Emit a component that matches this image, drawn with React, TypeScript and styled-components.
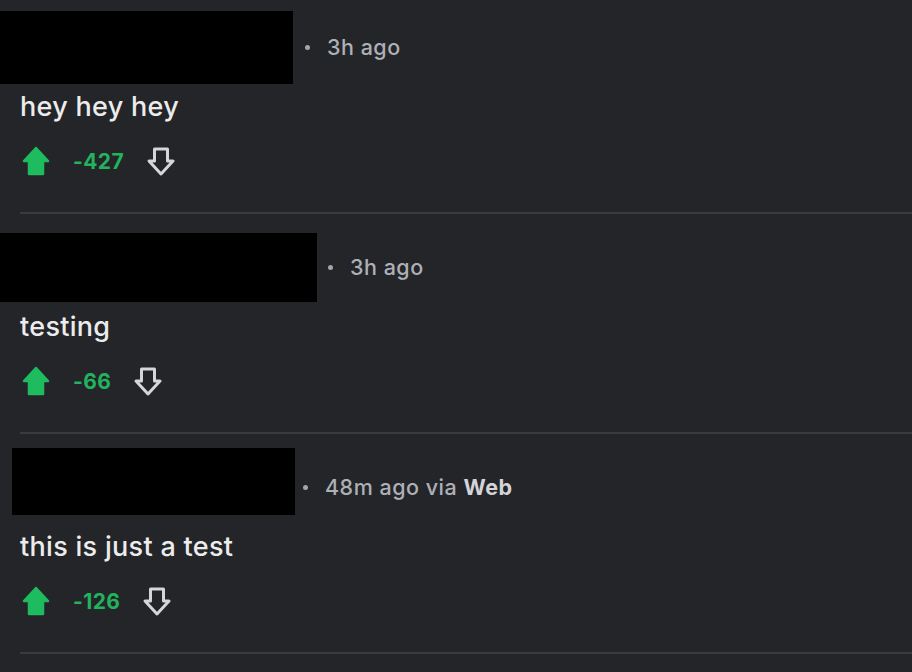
import React from "react";
import styled, { createGlobalStyle } from "styled-components";

const Global = createGlobalStyle`
  html, body { margin: 0; padding: 0; background: #242529; }
  body { font-family: Inter, "Noto Sans", sans-serif; overflow: hidden; }
`;

const List = styled.div`
  padding-left: 20px;
  width: 892px;
`;

const Comment = styled.article`
  padding: 18px 0 36px;
  border-bottom: 2px solid #3a3b40;
  &:first-child { padding-top: 12px; }
`;

const Header = styled.header`
  display: flex;
  align-items: center;
  height: 70px;
`;

const Redacted = styled.span<{ $w: number; $h: number; $left: number; $trail: number; $shift?: number }>`
  display: block;
  flex: none;
  background: #000;
  width: ${(p) => p.$w}px;
  height: ${(p) => p.$h}px;
  margin-left: ${(p) => p.$left}px;
  margin-right: ${(p) => p.$trail}px;
  margin-top: ${(p) => (p.$shift ?? 0) * 2}px;
`;

const Dot = styled.span`
  width: 5px;
  height: 5px;
  border-radius: 50%;
  background: #a3a5ac;
  margin-right: 17px;
  flex: none;
`;

const Meta = styled.span`
  font-size: 21.5px;
  font-weight: 500;
  color: #aeb0b7;
  letter-spacing: 0.5px;
  b { color: #d3d5da; font-weight: 700; }
`;

const Body = styled.p`
  margin: 7px 0 0;
  font-size: 27px;
  font-weight: 500;
  line-height: 36px;
  color: #ececec;
  letter-spacing: 0.3px;
`;

const Votes = styled.div`
  display: flex;
  align-items: center;
  gap: 23px;
  height: 30px;
  margin-top: 21px;
  padding-left: 2px;
`;

const Score = styled.span`
  font-size: 21px;
  font-weight: 700;
  color: #21b35d;
  letter-spacing: 0.4px;
`;

const IconBtn = styled.span`
  display: flex;
  width: 28px;
  height: 30px;
`;

const UpIcon = () => (
  <IconBtn>
    <svg width="28" height="30" viewBox="0 0 28 30">
      <path
        d="M14 2 L26 15 H21 V28 H7 V15 H2 Z"
        fill="#1fbb5f"
        stroke="#1fbb5f"
        strokeWidth="2.5"
        strokeLinejoin="round"
      />
    </svg>
  </IconBtn>
);

const DownIcon = () => (
  <IconBtn>
    <svg width="28" height="30" viewBox="0 0 28 30">
      <path
        d="M14 28 L26 15 H20.5 V3 H7.5 V15 H2 Z"
        fill="none"
        stroke="#d6d6d8"
        strokeWidth="3"
        strokeLinejoin="round"
      />
    </svg>
  </IconBtn>
);

type Item = {
  box: { w: number; h: number; left: number; trail: number; shift?: number };
  meta: React.ReactNode;
  text: string;
  score: string;
};

const items: Item[] = [
  { box: { w: 293, h: 73, left: -20, trail: 12 }, meta: "3h ago", text: "hey hey hey", score: "-427" },
  { box: { w: 317, h: 69, left: -20, trail: 11 }, meta: "3h ago", text: "testing", score: "-66" },
  {
    box: { w: 283, h: 67, left: -8, trail: 8, shift: -5.5 },
    meta: (
      <>
        48m ago via <b>Web</b>
      </>
    ),
    text: "this is just a test",
    score: "-126",
  },
];

export default function App() {
  return (
    <>
      <Global />
      <List>
        {items.map((it, i) => (
          <Comment key={i}>
            <Header>
              <Redacted $w={it.box.w} $h={it.box.h} $left={it.box.left} $trail={it.box.trail} $shift={it.box.shift} />
              <Dot />
              <Meta>{it.meta}</Meta>
            </Header>
            <Body>{it.text}</Body>
            <Votes>
              <UpIcon />
              <Score>{it.score}</Score>
              <DownIcon />
            </Votes>
          </Comment>
        ))}
      </List>
    </>
  );
}
